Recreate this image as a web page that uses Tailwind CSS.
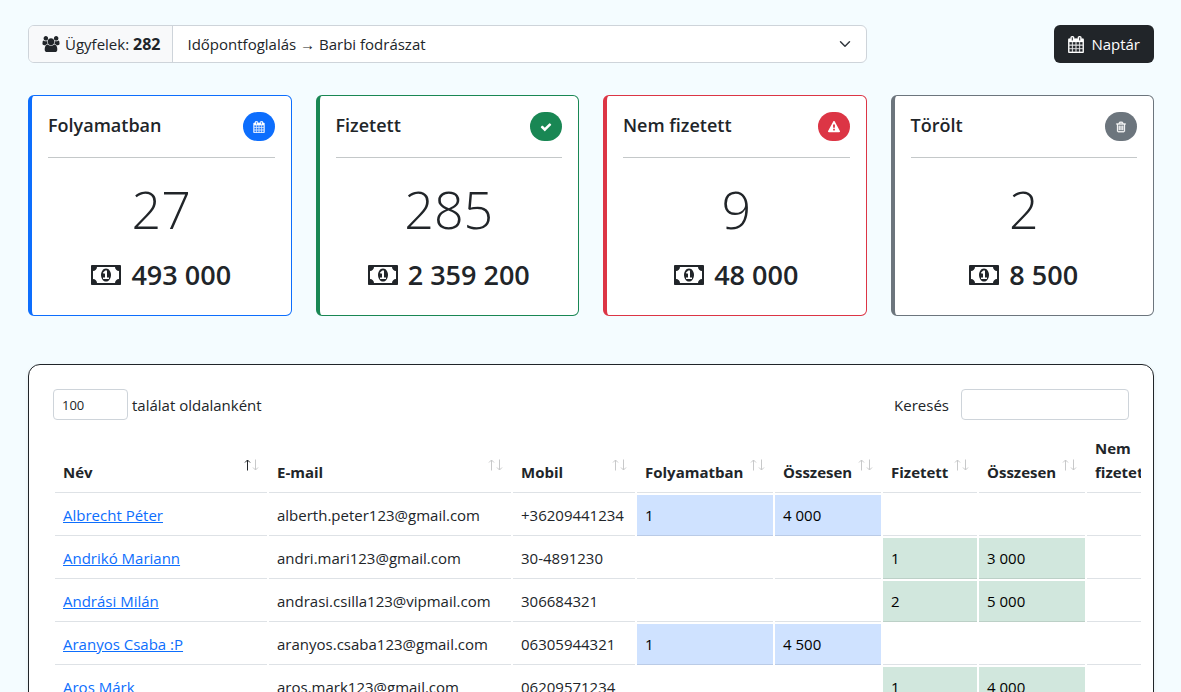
<!DOCTYPE html>
<html lang="hu">
<head>
<meta charset="utf-8">
<meta name="viewport" content="width=device-width, initial-scale=1">
<title>Ügyfelek</title>
<script src="https://cdn.jsdelivr.net/npm/@tailwindcss/browser@4"></script>
</head>
<body class="bg-[#f4fcff] font-['Open_Sans','Noto_Sans',sans-serif] text-[15px] leading-6 text-[#212529]">
<svg class="hidden" aria-hidden="true">
  <symbol id="calendar" viewBox="0 0 1664 1792"><path d="M128 1664h288v-288h-288v288zm352 0h320v-288h-320v288zm-352-352h288v-320h-288v320zm352 0h320v-320h-320v320zm-352-384h288v-288h-288v288zm736 736h320v-288h-320v288zm-384-736h320v-288h-320v288zm768 736h288v-288h-288v288zm-384-352h320v-320h-320v320zm-352-864v-288q0-13-9.500-22.500t-22.500-9.500h-64q-13 0-22.500 9.500t-9.500 22.500v288q0 13 9.500 22.500t22.500 9.500h64q13 0 22.500-9.500t9.500-22.500zm736 864h288v-320h-288v320zm-384-384h320v-288h-320v288zm384 0h288v-288h-288v288zm32-480v-288q0-13-9.500-22.500t-22.500-9.500h-64q-13 0-22.500 9.500t-9.500 22.500v288q0 13 9.500 22.500t22.500 9.500h64q13 0 22.500-9.500t9.500-22.500zm384-64v1280q0 52-38 90t-90 38h-1408q-52 0-90-38t-38-90v-1280q0-52 38-90t90-38h128v-96q0-66 47-113t113-47h64q66 0 113 47t47 113v96h384v-96q0-66 47-113t113-47h64q66 0 113 47t47 113v96h128q52 0 90 38t38 90z"/></symbol>
  <symbol id="money" viewBox="0 0 1920 1792"><path d="M768 1152h384v-96h-128v-448h-114l-148 137 77 80q42-37 55-57h2v288h-128v96zm512-256q0 70-21 142t-59.500 134-101.500 101-138 39-138-39-101.500-101-59.500-134-21-142 21-142 59.500-134 101.500-101 138-39 138 39 101.500 101 59.500 134 21 142zm512 256v-512q-106 0-181-75t-75-181h-1152q0 106-75 181t-181 75v512q106 0 181 75t75 181h1152q0-106 75-181t181-75zm128-832v1152q0 26-19 45t-45 19h-1792q-26 0-45-19t-19-45v-1152q0-26 19-45t45-19h1792q26 0 45 19t19 45z"/></symbol>
  <symbol id="users" viewBox="0 0 1920 1792"><path d="M593 896q-162 5-265 128h-134q-82 0-138-40.500t-56-118.500q0-353 124-353 6 0 43.500 21t97.500 42.500 119 21.500q67 0 133-23-5 37-5 66 0 139 81 256zm1071 637q0 120-73 189.500t-194 69.500h-874q-121 0-194-69.500t-73-189.500q0-53 3.500-103.500t14-109 26.500-108.500 43-97.500 62-81 85.500-53.500 111.500-20q10 0 43 21.500t73 48 107 48 135 21.500 135-21.500 107-48 73-48 43-21.500q61 0 111.500 20t85.500 53.500 62 81 43 97.500 26.500 108.500 14 109 3.500 103.500zm-1024-1277q0 106-75 181t-181 75-181-75-75-181 75-181 181-75 181 75 75 181zm704 384q0 159-112.500 271.500t-271.500 112.500-271.500-112.500-112.500-271.500 112.500-271.500 271.500-112.500 271.500 112.500 112.500 271.500zm576 225q0 78-56 118.500t-138 40.500h-134q-103-123-265-128 81-117 81-256 0-29-5-66 66 23 133 23 59 0 119-21.500t97.500-42.500 43.500-21q124 0 124 353zm-128-609q0 106-75 181t-181 75-181-75-75-181 75-181 181-75 181 75 75 181z"/></symbol>
  <symbol id="check" viewBox="0 0 1792 1792"><path d="M1671 566q0 40-28 68l-724 724-136 136q-28 28-68 28t-68-28l-136-136-362-362q-28-28-28-68t28-68l136-136q28-28 68-28t68 28l294 295 656-657q28-28 68-28t68 28l136 136q28 28 28 68z"/></symbol>
  <symbol id="warning" viewBox="0 0 1792 1792"><path d="M1024 1375v-190q0-14-9.500-23.500t-22.500-9.500h-192q-13 0-22.500 9.500t-9.500 23.500v190q0 14 9.500 23.500t22.500 9.500h192q13 0 22.500-9.500t9.500-23.500zm-2-374l18-459q0-12-10-19-13-11-24-11h-220q-11 0-24 11-10 7-10 21l17 457q0 10 10 16.500t24 6.500h185q14 0 23.500-6.500t10.500-16.500zm-14-934l768 1408q35 63-2 126-17 29-46.500 46t-63.500 17h-1536q-34 0-63.500-17t-46.500-46q-37-63-2-126l768-1408q17-31 47-49t65-18 65 18 47 49z"/></symbol>
  <symbol id="trash" viewBox="0 0 1792 1792"><path d="M704 736v576q0 14-9 23t-23 9h-64q-14 0-23-9t-9-23v-576q0-14 9-23t23-9h64q14 0 23 9t9 23zm256 0v576q0 14-9 23t-23 9h-64q-14 0-23-9t-9-23v-576q0-14 9-23t23-9h64q14 0 23 9t9 23zm256 0v576q0 14-9 23t-23 9h-64q-14 0-23-9t-9-23v-576q0-14 9-23t23-9h64q14 0 23 9t9 23zm128 724v-948h-896v948q0 22 7 40.500t14.500 27 10.500 8.500h832q3 0 10.500-8.500t14.500-27 7-40.500zm-672-1076h448l-48-117q-7-9-17-11h-317q-10 2-17 11zm928 32v64q0 14-9 23t-23 9h-96v948q0 83-47 143.500t-113 60.500h-832q-66 0-113-58.500t-47-141.500v-952h-96q-14 0-23-9t-9-23v-64q0-14 9-23t23-9h309l70-167q15-37 54-63t79-26h320q40 0 79 26t54 63l70 167h309q14 0 23 9t9 23z"/></symbol>
  <symbol id="up" viewBox="0 0 7 12"><path d="M3.500 11.500V1M1 3.500L3.500 1 6 3.500" fill="none" stroke="currentColor"/></symbol>
  <symbol id="down" viewBox="0 0 7 12"><path d="M3.500 .5V11M1 8.500L3.500 11 6 8.500" fill="none" stroke="currentColor"/></symbol>
</svg>

<main class="pt-[25px] pr-[27px] pb-6 pl-7">
  <header class="grid grid-cols-4 gap-6">
    <div class="col-span-3 flex h-[38px] overflow-hidden rounded-md border border-[#ced4da] bg-white">
      <label for="calendar-select" class="flex shrink-0 items-center gap-1 border-r border-[#ced4da] bg-[#f8f9fa] px-3">
        <svg class="h-4 w-5 fill-current"><use href="#users"/></svg>
        <span>Ügyfelek: <b class="text-base">282</b></span>
      </label>
      <div class="relative min-w-0 flex-1">
        <select id="calendar-select" class="h-full w-full appearance-none bg-transparent pr-9 pl-[14px] outline-none">
          <option>Időpontfoglalás → Barbi fodrászat</option>
        </select>
        <svg class="pointer-events-none absolute top-3 right-[15px] size-3 text-[#343a40]" viewBox="0 0 16 16"><path d="m2 5 6 6 6-6" fill="none" stroke="currentColor" stroke-width="2" stroke-linecap="round" stroke-linejoin="round"/></svg>
      </div>
    </div>
    <button type="button" class="flex h-[38px] items-center gap-[7px] justify-self-end rounded-md bg-[#212529] px-[14px] text-white">
      <svg class="h-[17px] w-4 fill-current stroke-current [stroke-width:30]"><use href="#calendar"/></svg>Naptár
    </button>
  </header>

  <section class="mt-8 grid grid-cols-4 gap-6">
    <article class="rounded-md border border-l-4 border-[#0d6efd] bg-white px-4 pt-4 pb-[22px]">
      <div class="flex items-start justify-between">
        <h2 class="text-[18px] leading-[26px] font-semibold">Folyamatban</h2>
        <span class="flex h-[29px] w-8 items-center justify-center rounded-full bg-[#0d6efd] text-white"><svg class="size-3 fill-current stroke-current [stroke-width:40]"><use href="#calendar"/></svg></span>
      </div>
      <hr class="mt-4 border-[#c4c8c9]">
      <p class="mt-[15px] text-center text-[52px] leading-[72px] font-light">27</p>
      <p class="mt-3 flex items-center justify-center gap-[10px] text-[27px] leading-9 font-semibold"><svg class="h-7 w-[30px] fill-current"><use href="#money"/></svg>493 000</p>
    </article>
    <article class="rounded-md border border-l-4 border-[#198754] bg-white px-4 pt-4 pb-[22px]">
      <div class="flex items-start justify-between">
        <h2 class="text-[18px] leading-[26px] font-semibold">Fizetett</h2>
        <span class="flex h-[29px] w-8 items-center justify-center rounded-full bg-[#198754] text-white"><svg class="size-3 fill-current"><use href="#check"/></svg></span>
      </div>
      <hr class="mt-4 border-[#c4c8c9]">
      <p class="mt-[15px] text-center text-[52px] leading-[72px] font-light">285</p>
      <p class="mt-3 flex items-center justify-center gap-[10px] text-[27px] leading-9 font-semibold"><svg class="h-7 w-[30px] fill-current"><use href="#money"/></svg>2 359 200</p>
    </article>
    <article class="rounded-md border border-l-4 border-[#dc3545] bg-white px-4 pt-4 pb-[22px]">
      <div class="flex items-start justify-between">
        <h2 class="text-[18px] leading-[26px] font-semibold">Nem fizetett</h2>
        <span class="flex h-[29px] w-8 items-center justify-center rounded-full bg-[#dc3545] text-white"><svg class="size-3 fill-current"><use href="#warning"/></svg></span>
      </div>
      <hr class="mt-4 border-[#c4c8c9]">
      <p class="mt-[15px] text-center text-[52px] leading-[72px] font-light">9</p>
      <p class="mt-3 flex items-center justify-center gap-[10px] text-[27px] leading-9 font-semibold"><svg class="h-7 w-[30px] fill-current"><use href="#money"/></svg>48 000</p>
    </article>
    <article class="rounded-md border border-l-4 border-[#6c757d] bg-white px-4 pt-4 pb-[22px]">
      <div class="flex items-start justify-between">
        <h2 class="text-[18px] leading-[26px] font-semibold">Törölt</h2>
        <span class="flex h-[29px] w-8 items-center justify-center rounded-full bg-[#6c757d] text-white"><svg class="size-3 fill-current stroke-current [stroke-width:50]"><use href="#trash"/></svg></span>
      </div>
      <hr class="mt-4 border-[#c4c8c9]">
      <p class="mt-[15px] text-center text-[52px] leading-[72px] font-light">2</p>
      <p class="mt-3 flex items-center justify-center gap-[10px] text-[27px] leading-9 font-semibold"><svg class="h-7 w-[30px] fill-current"><use href="#money"/></svg>8 500</p>
    </article>
  </section>

  <section class="mt-12 rounded-xl border border-[#212529] bg-white p-6 shadow-[0_2px_4px_rgba(0,0,0,0.075)]">
    <div class="flex items-center justify-between">
      <label class="flex items-center gap-1">
        <select class="h-[31px] w-[75px] appearance-none rounded border border-[#ced4da] bg-white px-2 text-[13px] outline-none"><option>100</option></select>
        találat oldalanként
      </label>
      <label class="flex items-center gap-3">Keresés
        <input type="search" class="h-[31px] w-[168px] rounded border border-[#ced4da] bg-white px-2 text-[13px] outline-none">
      </label>
    </div>
    <div class="-mr-3 mt-[6px] overflow-x-auto">
      <table class="w-[1130px] table-fixed border-separate border-spacing-[2px] text-left [&_a]:text-[#0d6efd] [&_a]:underline [&_button]:flex [&_button]:w-full [&_button]:items-end [&_button]:justify-between [&_button]:text-left [&_button]:font-bold [&_td]:h-[41px] [&_td]:border-b [&_td]:border-[#dee2e6] [&_td]:px-2 [&_td]:whitespace-nowrap [&_th]:border-b [&_th]:border-[#dee2e6] [&_th]:p-2 [&_th]:align-bottom">
        <colgroup><col class="w-[212px]"><col class="w-[242px]"><col class="w-[122px]"><col class="w-[136px]"><col class="w-[106px]"><col class="w-[94px]"><col class="w-[106px]"><col></colgroup>
        <thead>
          <tr>
            <th aria-sort="ascending"><button type="button">Név<span class="mb-[13px] flex gap-px"><svg class="h-3 w-[7px]"><use href="#up"/></svg><svg class="h-3 w-[7px] text-[#c8c9ca]"><use href="#down"/></svg></span></button></th>
            <th><button type="button">E-mail<span class="mb-[13px] flex gap-px text-[#c8c9ca]"><svg class="h-3 w-[7px]"><use href="#up"/></svg><svg class="h-3 w-[7px]"><use href="#down"/></svg></span></button></th>
            <th><button type="button">Mobil<span class="mb-[13px] flex gap-px text-[#c8c9ca]"><svg class="h-3 w-[7px]"><use href="#up"/></svg><svg class="h-3 w-[7px]"><use href="#down"/></svg></span></button></th>
            <th><button type="button">Folyamatban<span class="mb-[13px] flex gap-px text-[#c8c9ca]"><svg class="h-3 w-[7px]"><use href="#up"/></svg><svg class="h-3 w-[7px]"><use href="#down"/></svg></span></button></th>
            <th><button type="button">Összesen<span class="mb-[13px] flex gap-px text-[#c8c9ca]"><svg class="h-3 w-[7px]"><use href="#up"/></svg><svg class="h-3 w-[7px]"><use href="#down"/></svg></span></button></th>
            <th><button type="button">Fizetett<span class="mb-[13px] flex gap-px text-[#c8c9ca]"><svg class="h-3 w-[7px]"><use href="#up"/></svg><svg class="h-3 w-[7px]"><use href="#down"/></svg></span></button></th>
            <th><button type="button">Összesen<span class="mb-[13px] flex gap-px text-[#c8c9ca]"><svg class="h-3 w-[7px]"><use href="#up"/></svg><svg class="h-3 w-[7px]"><use href="#down"/></svg></span></button></th>
            <th><button type="button">Nem fizetett</button></th>
          </tr>
        </thead>
        <tbody>
          <tr><td><a href="#">Albrecht Péter</a></td><td>alberth.peter123@gmail.com</td><td>+36209441234</td><td class="border-[#bacbe6]! bg-[#cfe2ff] text-black">1</td><td class="border-[#bacbe6]! bg-[#cfe2ff] text-black">4 000</td><td></td><td></td><td></td></tr>
          <tr><td><a href="#">Andrikó Mariann</a></td><td>andri.mari123@gmail.com</td><td>30-4891230</td><td></td><td></td><td class="border-[#bcd0c7]! bg-[#d1e7dd] text-black">1</td><td class="border-[#bcd0c7]! bg-[#d1e7dd] text-black">3 000</td><td></td></tr>
          <tr><td><a href="#">Andrási Milán</a></td><td>andrasi.csilla123@vipmail.com</td><td>306684321</td><td></td><td></td><td class="border-[#bcd0c7]! bg-[#d1e7dd] text-black">2</td><td class="border-[#bcd0c7]! bg-[#d1e7dd] text-black">5 000</td><td></td></tr>
          <tr><td><a href="#">Aranyos Csaba :P</a></td><td>aranyos.csaba123@gmail.com</td><td>06305944321</td><td class="border-[#bacbe6]! bg-[#cfe2ff] text-black">1</td><td class="border-[#bacbe6]! bg-[#cfe2ff] text-black">4 500</td><td></td><td></td><td></td></tr>
          <tr><td><a href="#">Aros Márk</a></td><td>aros.mark123@gmail.com</td><td>06209571234</td><td></td><td></td><td class="border-[#bcd0c7]! bg-[#d1e7dd] text-black">1</td><td class="border-[#bcd0c7]! bg-[#d1e7dd] text-black">4 000</td><td></td></tr>
        </tbody>
      </table>
    </div>
  </section>
</main>
</body>
</html>
